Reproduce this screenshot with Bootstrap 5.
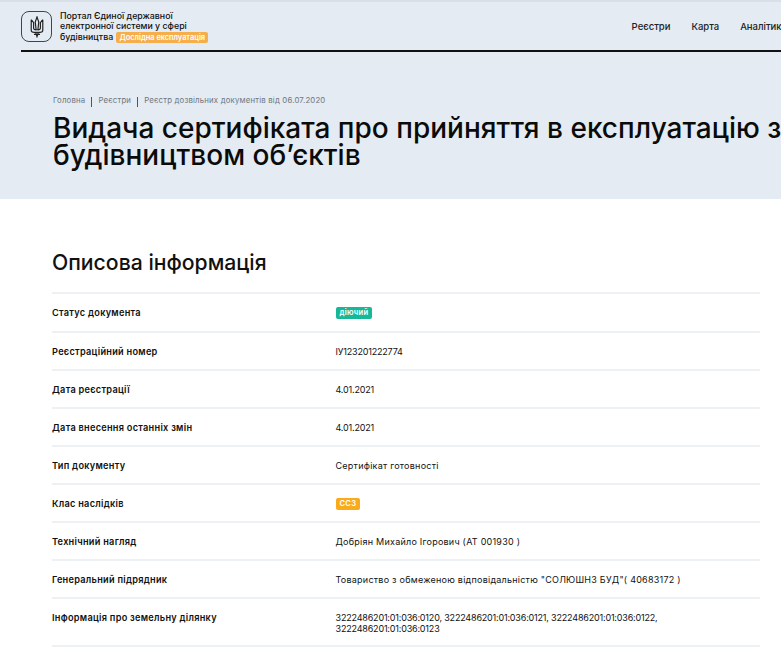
<!DOCTYPE html>
<html lang="uk"><head><meta charset="utf-8"><title>Реєстр</title>
<link rel="stylesheet" href="https://cdn.jsdelivr.net/npm/bootstrap@5.3.0/dist/css/bootstrap.min.css">
<style>
html,body{overflow:hidden;height:649px}
body{font-family:Inter,"Noto Sans",sans-serif;color:#111;background:#fff;font-size:9px}
.hero-zone{background:#e4ebf2;height:199px;border-top:2px solid #d9dfe6;padding-left:21px}
.top-bar{height:50px;border-bottom:2px solid #111;width:calc(100% + 6px);padding-top:9px}
.crest-box{width:31px;height:31px;border:1px solid #444;border-radius:8px;flex:none}
.portal-name{font-size:8.8px;line-height:10.5px;font-weight:500;margin-left:8px;margin-top:-.5px;white-space:nowrap}
.trial-tag{background:#f5ae4a;color:#fff;font-size:7.4px;font-weight:600;border-radius:2px;padding:1px 3px;margin-left:1px;line-height:9px;display:inline-block}
.top-links{margin-left:auto;gap:21px;font-size:9.5px;font-weight:500;white-space:nowrap;padding-top:9px}
.top-links a{color:#222;text-decoration:none}
.crumbs{padding:42px 0 0 32px;font-size:7.8px;letter-spacing:.18px;color:#6f7780;white-space:nowrap;line-height:12px}
.crumb-sep{display:inline-block;width:1px;height:10px;background:#555;margin:0 6px;vertical-align:-4px}
.page-title{font-size:28px;line-height:27px;font-weight:500;margin:8px 0 0 32px;white-space:nowrap;color:#0b0b0b}
.sheet{padding:0 21px 0 52px}
.section-head{font-size:21.2px;font-weight:500;line-height:26px;margin:50px 0 17px}
.info-row{border-top:2px solid #edf1f4;display:flex;min-height:38px;align-items:center;font-size:9px;line-height:11px;letter-spacing:.24px}
.info-row.first{min-height:39px}
.info-row.tall{align-items:flex-start;padding-top:13px;min-height:50px;border-bottom:2px solid #edf1f4}
.info-label{width:284px;flex:none;font-weight:600;font-size:9.2px;letter-spacing:.27px}
.row-value{margin-left:-.5px}
.digit-run{letter-spacing:-.18px}
.state-tag{color:#fff;font-size:7.6px;font-weight:600;border-radius:2px;padding:1px 4px;line-height:10px;display:inline-block}
.tag-green{background:#17b897}.tag-amber{background:#f9ab1c}
</style></head><body>
<div class="hero-zone">
 <div class="top-bar d-flex">
  <div class="crest-box d-flex align-items-center justify-content-center">
   <svg width="14" height="22" viewBox="0 0 15 24" fill="none" stroke="#222" stroke-width="1.3"><path d="M7.5 1 5.6 6.5 6.5 15h2l.9-8.5zM1.2 4v11.5c0 1.6 1.6 2.3 3.3 2.3h6c1.7 0 3.3-.7 3.3-2.3V4M1.2 4l2.6 3.2v6c0 1.4 1.2 2 2.7 2M13.8 4l-2.6 3.2v6c0 1.4-1.2 2-2.7 2M6 17.8l1.5 4.7L9 17.8M4.2 20h6.6"/></svg>
  </div>
  <div class="portal-name">Портал Єдиної державної<br>електронної системи у сфері<br>будівництва <span class="trial-tag">Дослідна експлуатація</span></div>
  <nav class="top-links d-flex"><a href="#">Реєстри</a><a href="#">Карта</a><a href="#">Аналітика</a></nav>
 </div>
 <div class="crumbs">Головна<span class="crumb-sep"></span>Реєстри<span class="crumb-sep"></span>Реєстр дозвільних документів від 06.07.2020</div>
 <h1 class="page-title">Видача сертифіката про прийняття в експлуатацію закінчених<br>будівництвом об’єктів</h1>
</div>
<div class="sheet">
 <h2 class="section-head">Описова інформація</h2>
 <div class="info-row first"><div class="info-label">Статус документа</div><div class="row-value"><span class="state-tag tag-green">діючий</span></div></div>
 <div class="info-row"><div class="info-label">Реєстраційний номер</div><div class="row-value digit-run">ІУ123201222774</div></div>
 <div class="info-row"><div class="info-label">Дата реєстрації</div><div class="row-value digit-run">4.01.2021</div></div>
 <div class="info-row"><div class="info-label">Дата внесення останніх змін</div><div class="row-value digit-run">4.01.2021</div></div>
 <div class="info-row"><div class="info-label">Тип документу</div><div class="row-value">Сертифікат готовності</div></div>
 <div class="info-row"><div class="info-label">Клас наслідків</div><div class="row-value"><span class="state-tag tag-amber">СС3</span></div></div>
 <div class="info-row"><div class="info-label">Технічний нагляд</div><div class="row-value">Добріян Михайло Ігорович (АТ 001930 )</div></div>
 <div class="info-row"><div class="info-label">Генеральний підрядник</div><div class="row-value">Товариство з обмеженою відповідальністю "СОЛЮШНЗ БУД"( 40683172 )</div></div>
 <div class="info-row tall"><div class="info-label">Інформація про земельну ділянку</div><div class="row-value digit-run">3222486201:01:036:0120, 3222486201:01:036:0121, 3222486201:01:036:0122,<br>3222486201:01:036:0123</div></div>
</div>
<script src="https://cdn.jsdelivr.net/npm/bootstrap@5.3.0/dist/js/bootstrap.bundle.min.js"></script>
</body></html>
